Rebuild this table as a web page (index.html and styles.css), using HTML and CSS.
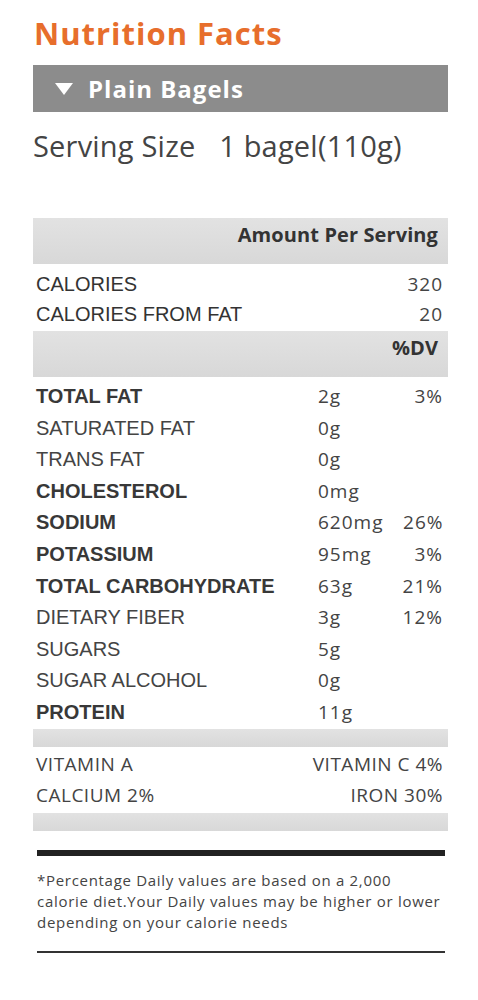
FILE: index.html
```html
<!DOCTYPE html>
<html lang="en">
<head>
    <meta charset="UTF-8">
    <meta name="viewport" content="width=device-width, initial-scale=1.0">
    <title>Nutrition Facts - Plain Bagels</title>
    <link rel="stylesheet" href="styles.css">
</head>
<body>
    <!-- Tabela nutricional do produto -->
    <div class="nutrition">
        <h1 class="titulo">Nutrition Facts</h1>

        <div class="produto-bar">
            <svg class="seta" width="18" height="12" viewBox="0 0 18 12"><polygon points="0,0 18,0 9,12" fill="#fff"/></svg>
            <span>Plain Bagels</span>
        </div>

        <p class="serving">Serving Size <span class="serving-valor">1 bagel(110g)</span></p>

        <div class="faixa faixa-alta">Amount Per Serving</div>

        <div class="calorias">
            <div class="linha-cal"><span>CALORIES</span><span class="num">320</span></div>
            <div class="linha-cal"><span>CALORIES FROM FAT</span><span class="num">20</span></div>
        </div>

        <div class="faixa faixa-alta">%DV</div>

        <div class="nutrientes">
            <div class="nutriente forte"><span class="nome">TOTAL FAT</span><span class="qtd">2g</span><span class="dv">3%</span></div>
            <div class="nutriente"><span class="nome">SATURATED FAT</span><span class="qtd">0g</span><span class="dv"></span></div>
            <div class="nutriente"><span class="nome">TRANS FAT</span><span class="qtd">0g</span><span class="dv"></span></div>
            <div class="nutriente forte"><span class="nome">CHOLESTEROL</span><span class="qtd">0mg</span><span class="dv"></span></div>
            <div class="nutriente forte"><span class="nome">SODIUM</span><span class="qtd">620mg</span><span class="dv">26%</span></div>
            <div class="nutriente forte"><span class="nome">POTASSIUM</span><span class="qtd">95mg</span><span class="dv">3%</span></div>
            <div class="nutriente forte"><span class="nome">TOTAL CARBOHYDRATE</span><span class="qtd">63g</span><span class="dv">21%</span></div>
            <div class="nutriente"><span class="nome">DIETARY FIBER</span><span class="qtd">3g</span><span class="dv">12%</span></div>
            <div class="nutriente"><span class="nome">SUGARS</span><span class="qtd">5g</span><span class="dv"></span></div>
            <div class="nutriente"><span class="nome">SUGAR ALCOHOL</span><span class="qtd">0g</span><span class="dv"></span></div>
            <div class="nutriente forte"><span class="nome">PROTEIN</span><span class="qtd">11g</span><span class="dv"></span></div>
        </div>

        <div class="faixa faixa-fina"></div>

        <div class="vitaminas">
            <div class="vit-linha"><span>VITAMIN A</span><span>VITAMIN C 4%</span></div>
            <div class="vit-linha"><span>CALCIUM 2%</span><span>IRON 30%</span></div>
        </div>

        <div class="faixa faixa-fina"></div>

        <div class="traco-grosso"></div>
        <p class="nota">*Percentage Daily values are based on a 2,000<br>calorie diet.Your Daily values may be higher or lower<br>depending on your calorie needs</p>
        <div class="traco-fino"></div>
    </div>
</body>
</html>
```

FILE: styles.css
```css
/* Tabela nutricional */
body {
    margin: 0;
    padding: 0;
    background-color: #fff;
    color: #333;
    font-family: 'Open Sans', sans-serif;
}

.nutrition {
    width: 415px;
    margin-left: 33px;
}

.titulo {
    margin: 15px 0 0 1px;
    font-size: 31px;
    line-height: 36px;
    font-weight: 700;
    letter-spacing: 1px;
    color: #e76e2c;
}

.produto-bar {
    margin-top: 14px;
    height: 47px;
    background-color: #8c8c8c;
    color: #fff;
    display: flex;
    align-items: center;
    padding-left: 22px;
    font-size: 24px;
    font-weight: 700;
    letter-spacing: 1px;
}

.seta {
    margin-right: 15px;
}

.serving {
    margin: 14px 0 0;
    font-size: 29px;
    line-height: 40px;
    letter-spacing: 0.2px;
    color: #444;
}

.serving-valor {
    margin-left: 16px;
}

.faixa {
    background: linear-gradient(#e2e2e2, #d8d8d8);
}

.faixa-alta {
    margin-top: 52px;
    height: 46px;
    box-sizing: border-box;
    padding: 2px 10px 0 0;
    text-align: right;
    font-size: 20px;
    font-weight: 700;
    line-height: 30px;
    letter-spacing: 0.1px;
    color: #333;
}

.faixa-fina {
    height: 18px;
}

.calorias {
    padding: 5px 0 2px;
}

.calorias + .faixa-alta {
    margin-top: 0;
}

.linha-cal {
    display: flex;
    justify-content: space-between;
    padding: 0 5px 0 3px;
    height: 30px;
    line-height: 30px;
    font-family: 'Liberation Sans', Arial, sans-serif;
    font-size: 20px;
    color: #333;
}

.num {
    font-family: 'Open Sans', sans-serif;
    font-size: 19px;
    letter-spacing: 1px;
    color: #444;
}

.nutrientes {
    margin-top: 4px;
}

.nutriente {
    display: grid;
    grid-template-columns: 282px 1fr 60px;
    padding: 0 5px 0 3px;
    height: 31.6px;
    line-height: 31.6px;
    font-size: 20px;
    color: #444;
}

.nome {
    font-family: 'Liberation Sans', Arial, sans-serif;
}

.forte .nome {
    font-weight: 700;
    color: #383838;
}

.qtd, .dv {
    font-size: 19px;
    letter-spacing: 1px;
}

.dv {
    text-align: right;
}

.vitaminas {
    padding: 2px 5px 2px 3px;
}

.vit-linha {
    display: flex;
    justify-content: space-between;
    font-size: 19px;
    line-height: 31px;
    letter-spacing: 0.5px;
    color: #444;
}

.traco-grosso {
    margin: 19px 3px 0 4px;
    height: 6px;
    background-color: #222;
}

.nota {
    margin: 14px 0 0 4px;
    font-size: 15px;
    line-height: 21px;
    letter-spacing: 0.7px;
    color: #444;
    white-space: nowrap;
}

.traco-fino {
    margin: 18px 3px 0 4px;
    height: 2px;
    background-color: #333;
}
```
